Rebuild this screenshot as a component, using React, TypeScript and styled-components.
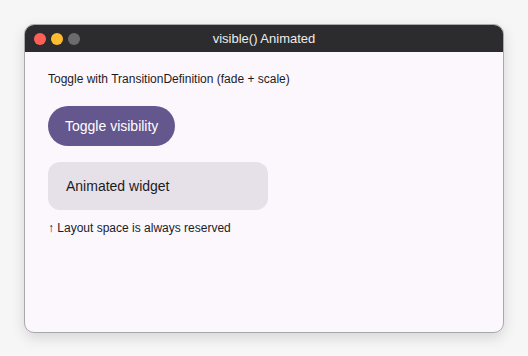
import React from 'react'
import styled, { createGlobalStyle } from 'styled-components'

const GlobalStyle = createGlobalStyle`
  html, body {
    margin: 0;
    padding: 0;
    background: #f6f6f6;
    font-family: "Liberation Sans", Arial, sans-serif;
  }
`

const Stage = styled.div`
  width: 528px;
  height: 356px;
  padding: 24px;
  box-sizing: border-box;
`

const Window = styled.div`
  width: 480px;
  height: 309px;
  border-radius: 10px;
  overflow: hidden;
  background: #fcf7fd;
  border: 1px solid #a9a9ab;
  box-sizing: border-box;
  box-shadow: 0 5px 14px rgba(0, 0, 0, 0.13);
  display: flex;
  flex-direction: column;
`

const TitleBar = styled.div`
  position: relative;
  height: 27px;
  background: #2c2c2e;
  display: flex;
  align-items: center;
  justify-content: center;
  color: #ececed;
  font-size: 13px;
  flex-shrink: 0;
`

const Lights = styled.div`
  position: absolute;
  left: 9px;
  top: 8px;
  display: flex;
  gap: 5px;
`

const Light = styled.span<{ $c: string }>`
  width: 12px;
  height: 12px;
  border-radius: 50%;
  background: ${({ $c }) => $c};
`

const Body = styled.div`
  padding: 20px 23px;
  display: flex;
  flex-direction: column;
  align-items: flex-start;
`

const Caption = styled.div`
  font-size: 12px;
  line-height: 14px;
  color: #1c1b1f;
`

const ToggleButton = styled.button`
  margin-top: 20px;
  height: 40px;
  padding: 0 17px;
  border: none;
  border-radius: 20px;
  background: #64578e;
  color: #ffffff;
  font-family: inherit;
  font-size: 14px;
`

const Widget = styled.div`
  margin-top: 16px;
  width: 220px;
  height: 48px;
  box-sizing: border-box;
  padding: 0 18px;
  border-radius: 12px;
  background: #e6e0e8;
  color: #1c1b1f;
  font-size: 14px;
  display: flex;
  align-items: center;
`

const Note = styled(Caption)`
  margin-top: 11px;
`

export default function App() {
  return (
    <Stage>
      <GlobalStyle />
      <Window>
        <TitleBar>
          <Lights>
            <Light $c="#fe5f57" />
            <Light $c="#febc2e" />
            <Light $c="#6b6b6e" />
          </Lights>
          visible() Animated
        </TitleBar>
        <Body>
          <Caption>Toggle with TransitionDefinition (fade + scale)</Caption>
          <ToggleButton>Toggle visibility</ToggleButton>
          <Widget>Animated widget</Widget>
          <Note>↑ Layout space is always reserved</Note>
        </Body>
      </Window>
    </Stage>
  )
}
